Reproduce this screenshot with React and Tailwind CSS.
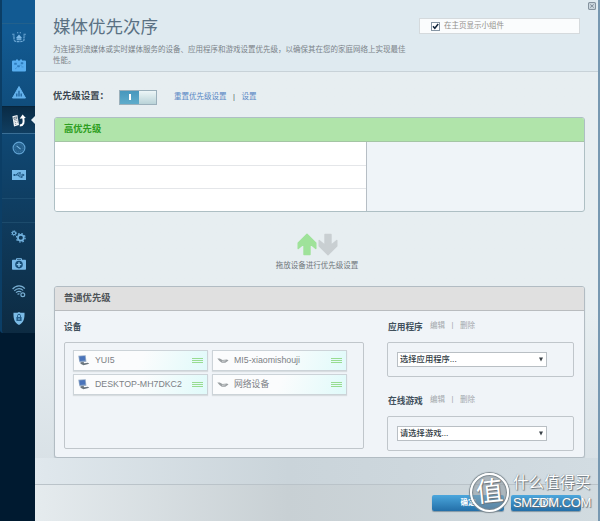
import React from 'react';

const devices = [
  { name: 'YUI5', type: 'pc' },
  { name: 'MI5-xiaomishouji', type: 'network' },
  { name: 'DESKTOP-MH7DKC2', type: 'pc' },
  { name: '网络设备', type: 'network' },
];

const NetworkMapIcon = () => (
  <svg width="14" height="11" viewBox="0 0 14 11" fill="none" stroke="#6fa9d6">
    <path d="M4.6 5.2 7 2.4l2.400 2.800v1.600H4.600z" fill="#7db8e6" stroke="none" />
    <path d="M2 5v2.700c0 1.600 2 2 5 2s5-.4 5-2V5" strokeDasharray="2.500 .7" strokeWidth="1.200" />
    <path d="M.2 2.200h2.300M.8 4h2M11.500 2.200h2.300M11.200 4h2M5 .8h1.300M7.700.8H9M4.600 7.600h4.800" strokeWidth="1.100" />
  </svg>
);

const GuestIcon = () => (
  <svg width="14" height="13" viewBox="0 0 14 13">
    <path d="M1 1.5h3V.5h2v1h2v-1h2v1h3a1 1 0 0 1 1 1v9a1 1 0 0 1-1 1H1a1 1 0 0 1-1-1v-9a1 1 0 0 1 1-1z" fill="#58aef0" />
    <path d="M2.5 4h2v1.5h-2zM9 3.5h2V5H9zM5.5 6.5h2V8h-2zM9.5 8h2M3 10l2-1.5M8 5.5l2 2" fill="#2f7dbf" stroke="#2f7dbf" strokeWidth=".5" />
  </svg>
);

const ParentalIcon = () => (
  <svg width="14" height="13" viewBox="0 0 14 13">
    <path d="M7 .5 13.5 12H.5z" fill="#64b2ec" stroke="#64b2ec" strokeLinejoin="round" />
    <path d="M4.8 7.500v3M7 4.700v5.800M9.200 7.500v3" stroke="#185c96" strokeWidth="1.200" />
  </svg>
);

const PriorityIcon = () => (
  <svg width="14" height="13" viewBox="0 0 14 13" fill="none">
    <path d="M.4 2.200 5.400.9 7 11l-5 1.400z" fill="#f2f6f8" />
    <path d="m1.800 3.600 2.800-.7.300 1.800-2.800.7zM2.500 7l1-.3M4.500 6.500l1-.3M2.800 8.800l1-.3M4.800 8.300l1-.3M3.200 10.500l1-.3" stroke="#3c5063" strokeWidth=".7" />
    <path d="M7.800 11.500c3.800-.2 4.400-3 3.400-8" stroke="#fff" strokeWidth="2" />
    <path d="m7.600 4.700 3-4.200 3.200 3.400z" fill="#fff" />
  </svg>
);

const SpeedIcon = () => (
  <svg width="14" height="14" viewBox="0 0 14 14" fill="none">
    <circle cx="7" cy="7" r="5.900" fill="#245f8c" stroke="#62a4d4" strokeWidth="1.100" />
    <circle cx="7" cy="7" r="4" stroke="#3f7dac" strokeDasharray="1 1" />
    <path d="m4.600 4.800 4 3.400" stroke="#79b7e2" strokeWidth="1.100" />
  </svg>
);

const UsbIcon = () => (
  <svg width="14" height="10" viewBox="0 0 14 10" fill="none">
    <rect width="14" height="10" fill="#75b9e8" />
    <path d="M2 5h9.5M4.2 5l1.6-2h2M6 5l1.6 2h2" stroke="#1b5480" strokeWidth=".9" />
    <circle cx="2.3" cy="5" r="1" fill="#1b5480" />
    <path d="m10.5 3.5 2.2 1.5-2.2 1.5zM7.3 2.2h1.5v1.5H7.3zM9 6.2h1.5v1.5H9z" fill="#1b5480" />
  </svg>
);

const GearsIcon = () => (
  <svg width="15" height="13" viewBox="0 0 15 13" fill="none" stroke="#72b2df">
    <circle cx="3" cy="3.2" r="1.6" strokeWidth="1.1" />
    <circle cx="3" cy="3.2" r="2.5" strokeWidth=".9" strokeDasharray="1 .96" />
    <circle cx="9.8" cy="7.8" r="2.9" strokeWidth="1.7" />
    <circle cx="9.8" cy="7.8" r="4.3" strokeWidth="1.3" strokeDasharray="1.6 1.78" />
  </svg>
);

const MedicIcon = () => (
  <svg width="14" height="12" viewBox="0 0 14 12" fill="none">
    <path d="M4.5 2V.7h5V2" stroke="#78b8e6" />
    <rect y="1.7" width="14" height="10" rx=".7" fill="#78b8e6" />
    <circle cx="7" cy="6.6" r="3.8" fill="#184e78" />
    <path d="M7 4.3v4.6M4.7 6.6h4.6" stroke="#8cc8f0" strokeWidth="1.4" />
  </svg>
);

const WifiIcon = () => (
  <svg width="14" height="13" viewBox="0 0 14 13" fill="none" stroke="#78aed2" strokeWidth="1.2">
    <path d="M.6 4c3.500-4.200 9.300-4.200 12.200-.4M2.300 5.900c2.700-3 6.800-3 8.800-.4M4 7.700c1.700-1.800 4-1.800 5.300-.5M5.500 9.400c.7-.6 1.300-.7 2-.4" />
    <circle cx="10.800" cy="9.800" r="1.900" />
  </svg>
);

const ShieldIcon = () => (
  <svg width="12" height="13" viewBox="0 0 12 13" fill="none">
    <path d="M6 0c1.500 1 3.500 1 5.500.700C11.700 6 11 10.500 6 13 1 10.500.300 6 .500.700 2.500 1 4.500 1 6 0z" fill="#7bbbe6" />
    <rect x="3.400" y="5" width="5.200" height="4" fill="#245f8c" />
    <path d="M4.500 5V3.800a1.500 1.500 0 0 1 3 0V5" stroke="#245f8c" />
    <path d="M6 6v2" stroke="#7bbbe6" />
  </svg>
);

const PcIcon = () => (
  <svg width="12" height="11" viewBox="0 0 12 11">
    <path d="m.3.700 7.400-.4.700 6.400-7 .500z" fill="#8fa6c4" />
    <path d="m1.300 1.400 5.500-.3.500 4.500-5.400.400z" fill="#4a74bb" />
    <path d="m2.500 7.300 3-.4.800 1.400 3.500-.5 1.500.900-5.800 1.500-3-1.500z" fill="#6a757d" />
  </svg>
);

const NetworkDeviceIcon = () => (
  <svg width="12" height="6" viewBox="0 0 12 6">
    <path d="M.300.600 2.700.400l2.800 1.500 4.500-.4 1.500.9-3.200 2.400H4.800L2.500 3z" fill="#9a9fa2" />
    <path d="m5 3.300 3.500-.500" stroke="#e4e7e8" strokeWidth=".8" />
  </svg>
);

const Arrow = ({ color, down }) => (
  <svg width="20" height="23" viewBox="0 0 20 23" className={down ? 'rotate-180' : ''}>
    <path d="M10 1.200 18.800 10v5.500L13 10.800V21.500H7V10.800L1.200 15.500V10z" fill={color} stroke={color} strokeWidth="1.400" strokeLinejoin="round" />
  </svg>
);

const DeviceItem = ({ device }) => (
  <div className="flex h-[21px] items-center border border-[#ccd3d8] bg-linear-110 from-[#fbfcfd] from-50% to-[#e0fafa] pl-[4px] pr-[4px] shadow-[0_1px_1px_#d8dde0]">
    <div className="w-[17px] shrink-0">{device.type === 'pc' ? <PcIcon /> : <NetworkDeviceIcon />}</div>
    <span className="flex-1 whitespace-nowrap text-[8.8px] leading-none text-[#7b8085]">{device.name}</span>
    <div className="flex w-[11px] flex-col gap-px">
      <div className="h-px bg-[#98dc91]" />
      <div className="h-px bg-[#98dc91]" />
      <div className="h-px bg-[#98dc91]" />
    </div>
  </div>
);

const SelectGroup = ({ title, placeholder }) => (
  <div className="h-[74px]">
    <div className="flex h-[21px] items-start whitespace-nowrap pl-px text-[7.5px] leading-[10px] text-[#a3a8ac]">
      <span className="w-[42px] pt-px text-[8.7px] font-bold text-[#40505c]">{title}</span>
      <span>编辑</span>
      <span className="w-[15px] text-center leading-[8px]">|</span>
      <span>删除</span>
    </div>
    <div className="flex h-[35px] w-[187px] items-center rounded-[2px] border border-[#c0c6cb] pl-[9px]">
      <div className="flex h-[15px] w-[150px] items-center justify-between border border-[#b9bfc4] bg-white pl-[2px] pr-[3px] text-[8.3px] leading-none text-[#303a42]">
        <span className="font-medium">{placeholder}</span>
        <svg width="4" height="5" viewBox="0 0 4 5">
          <path d="M0 .5h4L2 4.500z" fill="#394047" />
        </svg>
      </div>
    </div>
  </div>
);

const Sidebar = () => (
  <div className="h-[521px] w-[35px] shrink-0 bg-[#001a30]">
    <div className="flex h-[333px] flex-col rounded-bl-[3px] border-l-2 border-[#0b3e66] bg-linear-to-b from-[#125a92] from-10% via-[#0f4874] via-40% to-[#0d2b42]">
      <div className="h-[24px] shrink-0 border-b border-[#22608c]" />
      <div className="flex h-[82px] shrink-0 flex-col items-center">
        <div className="flex h-[27px] items-center"><NetworkMapIcon /></div>
        <div className="flex h-[28px] items-center"><GuestIcon /></div>
        <div className="flex h-[27px] items-center"><ParentalIcon /></div>
      </div>
      <div className="flex h-[28px] shrink-0 items-center border-b border-t border-b-[#3a6f96] border-t-[#07253c] bg-linear-to-b from-[#092b45] to-[#103e61]">
        <div className="flex-1 pl-[10px]"><PriorityIcon /></div>
        <svg width="4" height="8" viewBox="0 0 4 8">
          <path d="M4 0v8L0 4z" fill="#e6f0f5" />
        </svg>
      </div>
      <div className="flex h-[65px] shrink-0 flex-col items-center border-b border-[#1b4c70]">
        <div className="flex h-[27px] items-center"><SpeedIcon /></div>
        <div className="flex h-[28px] items-center"><UsbIcon /></div>
      </div>
      <div className="h-[24px] shrink-0 border-b border-[#1c4b6c]" />
      <div className="flex flex-1 flex-col items-center">
        <div className="flex h-[27px] items-center"><GearsIcon /></div>
        <div className="flex h-[28px] items-center"><MedicIcon /></div>
        <div className="flex h-[27px] items-center"><WifiIcon /></div>
        <div className="flex h-[27px] items-center"><ShieldIcon /></div>
      </div>
    </div>
  </div>
);

const Header = () => (
  <div className="flex h-[72px] shrink-0 border-b border-[#c8d2d8] bg-[#dfeaf0] pl-[18px]">
    <div className="w-[366px] pt-[16px]">
      <h1 className="text-[17.5px] leading-[22px] text-[#5a7183]">媒体优先次序</h1>
      <p className="mt-[7px] whitespace-nowrap text-[7.5px] leading-[10.500px] text-[#7b8389]">
        为连接到流媒体或实时媒体服务的设备、应用程序和游戏设置优先级，以确保其在您的家庭网络上实现最佳
        <br />
        性能。
      </p>
    </div>
    <div className="mt-[18px] flex h-[16px] w-[161px] items-center gap-[4px] border border-[#d5dadd] bg-[#fafcfd] pl-[11px]">
      <svg width="9" height="9" viewBox="0 0 9 9" fill="none">
        <rect x=".5" y=".5" width="8" height="8" fill="#fff" stroke="#8797a5" />
        <path d="m2 4.300 1.800 2L7.200 2" stroke="#12263c" strokeWidth="1.500" />
      </svg>
      <span className="text-[7.500px] leading-none text-[#928f8c]">在主页显示小组件</span>
    </div>
    <div className="ml-[8px] mt-[2px]">
      <svg width="8" height="8" viewBox="0 0 8 8" fill="none" stroke="#84929e">
        <rect x=".6" y=".6" width="6.800" height="6.800" rx="1" strokeWidth="1.200" />
        <path d="m2.300 2.300 3.400 3.400M5.700 2.300 2.300 5.700" strokeWidth="1.100" />
      </svg>
    </div>
  </div>
);

const Watermark = () => (
  <div className="absolute left-[470px] top-[472px] flex h-[40px] items-center text-white [text-shadow:1px_1px_1px_#68737b,0_0_1px_#68737b]">
    <div className="flex h-[39px] w-[39px] items-center justify-center rounded-full border-2 border-white bg-[#8c969d]/50 text-[27px] leading-none shadow-[0_0_1px_1px_#7c878e,inset_0_0_1px_1px_#7c878e]">
      <span className="-rotate-6">值</span>
    </div>
    <div className="ml-[4px] whitespace-nowrap">
      <div className="text-[15.500px] leading-[22px]">什么值得买</div>
      <div className="text-[13px] leading-[18px] tracking-[-0.400px]">SMZDM.COM</div>
    </div>
  </div>
);

const App = () => {
  return (
    <div className="relative flex h-[521px] w-[600px] overflow-hidden font-['Liberation_Sans','Noto_Sans_CJK_SC',sans-serif]">
      <Sidebar />
      <div className="flex w-[565px] flex-col border-r-2 border-[#7798b1] bg-linear-to-b from-[#e7eef1] from-60% to-[#d3dce2]">
        <Header />
        <div className="flex h-[45px] shrink-0 items-center whitespace-nowrap pl-[18px] pt-[5px] text-[7.500px] leading-none text-[#5987c4]">
          <span className="w-[66px] text-[9.300px] font-bold text-[#3b464f]">优先级设置：</span>
          <div className="flex h-[15px] w-[38px] border border-[#9bb0bb] bg-linear-to-b from-[#edf6f7] to-[#b9d3d8]">
            <div className="flex w-[19px] items-center justify-center bg-linear-to-b from-[#4797bd] to-[#5eaccb]">
              <div className="h-[6px] w-[2px] bg-white" />
            </div>
          </div>
          <span className="ml-[17px]">重置优先级设置</span>
          <span className="w-[15px] text-center text-[#555d64]">|</span>
          <span>设置</span>
        </div>

        <div className="ml-[19px] flex h-[95px] w-[531px] shrink-0 flex-col overflow-hidden rounded-[3px] border border-[#aebfc4] bg-[#eff4f8]">
          <div className="flex h-[24px] shrink-0 items-center border-b border-[#a4c5a4] bg-[#b0e4aa] pl-[9px] pt-px text-[9.300px] font-bold leading-none text-[#2c9e20]">
            高优先级
          </div>
          <div className="flex w-[312px] flex-1 flex-col border-r border-[#b6bec5] bg-white">
            <div className="h-[24px] border-b border-[#e4e6e9]" />
            <div className="h-[23px] border-b border-[#e4e6e9]" />
          </div>
        </div>

        <div className="flex h-[74px] shrink-0 flex-col items-center pl-[1px] pt-[21px]">
          <div className="flex gap-px">
            <Arrow color="#9fe29a" />
            <Arrow color="#c9cfd2" down />
          </div>
          <p className="mt-[4px] text-[7.500px] leading-[11px] text-[#70777c]">拖放设备进行优先级设置</p>
        </div>

        <div className="ml-[19px] flex h-[172px] w-[531px] shrink-0 flex-col overflow-hidden rounded-[3px] border border-[#b2bcc3] bg-[#f0f4f8] shadow-[0_1px_1px_#bbc6cd]">
          <div className="flex h-[24px] shrink-0 items-center border-b border-[#b9bcbf] bg-[#e0e0e0] pl-[9px] pt-px text-[9.300px] font-bold leading-none text-[#4e5357]">
            普通优先级
          </div>
          <div className="flex flex-1 pl-[9px] pt-[10px]">
            <div className="w-[323px]">
              <div className="h-[21px] pt-px text-[8.700px] font-bold leading-[10px] text-[#40505c]">设备</div>
              <div className="grid h-[107px] w-[300px] grid-cols-[135px_135px] content-start gap-x-[4px] gap-y-[3px] rounded-[2px] border border-[#c0c6cb] pl-[8px] pt-[7px]">
                {devices.map((device) => (
                  <DeviceItem key={device.name} device={device} />
                ))}
              </div>
            </div>
            <div>
              <SelectGroup title="应用程序" placeholder="选择应用程序..." />
              <SelectGroup title="在线游戏" placeholder="请选择游戏..." />
            </div>
          </div>
        </div>

        <div className="h-[26px] shrink-0 bg-linear-to-r from-[#e0e8ed] via-[#cad4da] via-45% to-[#d2dce2]" />
        <div className="flex flex-1 gap-[7px] border-t border-[#bac3c9] bg-linear-to-r from-[#e5ebee] via-[#c8d0d4] via-45% to-[#d1dbe0] pl-[397px] pt-[10px] text-[7.500px] font-bold text-white">
          <button className="h-[16px] w-[72px] rounded-[2px] bg-linear-to-b from-[#4ba7dd] to-[#236fa8] leading-none shadow-[0_1px_1px_#8196a3]">确定</button>
          <button className="h-[16px] w-[70px] rounded-[2px] bg-linear-to-b from-[#4ba7dd] to-[#236fa8] leading-none shadow-[0_1px_1px_#8196a3]">取消</button>
        </div>
      </div>
      <Watermark />
    </div>
  );
};

export default App;
